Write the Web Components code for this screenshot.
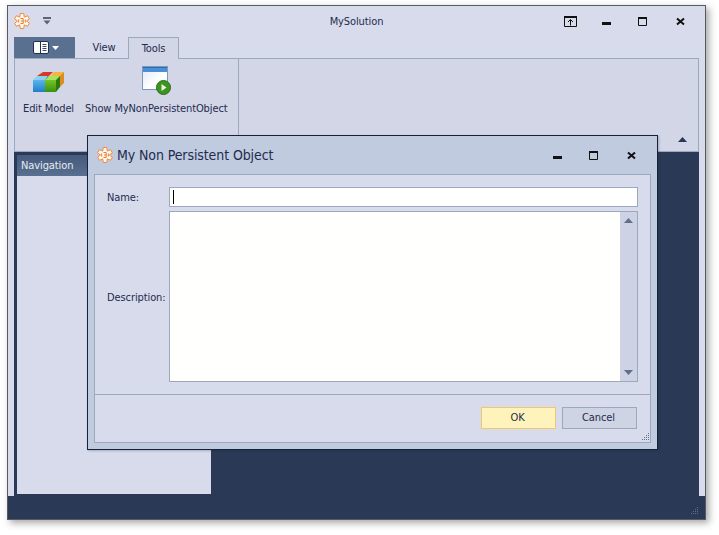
<!DOCTYPE html>
<html><head><meta charset="utf-8">
<style>
html,body{margin:0;background:#fff}
body{padding:5px 0 0 7px;font:11px "DejaVu Sans Condensed","DejaVu Sans",sans-serif;font-stretch:condensed;letter-spacing:-.1px;color:#1f2b4d;height:530px;box-sizing:border-box;overflow:hidden}
</style></head><body>
<x-window>
  <x-titlebar slot="title"></x-titlebar>
  <x-tabs slot="tabs"></x-tabs>
  <x-ribbon slot="ribbon"></x-ribbon>
  <x-nav slot="nav"></x-nav>
  <x-dialog slot="dialog"></x-dialog>
</x-window>
<script>
function logoPath(){let p=[];for(let i=0;i<6;i++){const a=(i*60-90)*Math.PI/180,d=.23,n=(i*60-60)*Math.PI/180;
 const pt=(r,t)=>(8+r*Math.cos(t)).toFixed(2)+' '+(8+r*Math.sin(t)).toFixed(2);
 p.push(pt(7.7,a-d),pt(7.7,a+d),pt(4.5,n));}return 'M'+p.join('L')+'z';}
const LOGO=(s)=>`<svg width="${s}" height="${s}" viewBox="0 0 16 16" style="display:block"><path d="${logoPath()}" fill="#fff8f0" stroke="#f28a3a" stroke-width="1" stroke-linejoin="miter"/><path d="M6.500 5.500h2.700v5H6.500M7 8h2M4.700 6.500v3M11.300 6.500v3" fill="none" stroke="#e97a28" stroke-width="1"/></svg>`;
const GRIP=`<svg width="8" height="8" viewBox="0 0 8 8" style="display:block" fill="#5f7088"><rect x="6" y="0" width="1" height="1"/><rect x="4" y="2" width="1" height="1"/><rect x="6" y="2" width="1" height="1"/><rect x="2" y="4" width="1" height="1"/><rect x="4" y="4" width="1" height="1"/><rect x="6" y="4" width="1" height="1"/><rect x="0" y="6" width="1" height="1"/><rect x="2" y="6" width="1" height="1"/><rect x="4" y="6" width="1" height="1"/><rect x="6" y="6" width="1" height="1"/></svg>`;
const ICON={
 min:`<svg width="9" height="9" viewBox="0 0 9 9"><rect x="0" y="5" width="9" height="3" fill="#111"/></svg>`,
 max:`<svg width="9" height="9" viewBox="0 0 9 9"><path d="M.5 1.500h8v7h-8z" fill="none" stroke="#111"/><rect y="0" width="9" height="2" fill="#111"/></svg>`,
 close:`<svg width="9" height="9" viewBox="0 0 9 9"><path d="M1 1.500l7 6M8 1.500l-7 6" stroke="#111" stroke-width="2" fill="none"/></svg>`,
 pin:`<svg width="13" height="11" viewBox="0 0 13 11"><path d="M.5.500h12v10H.5z" fill="none" stroke="#111"/><rect width="13" height="2" fill="#111"/><path d="M6.500 9.500V4M4 6l2.500-2.500L9 6" fill="none" stroke="#111"/></svg>`
};
function def(name,html,fn){customElements.define(name,class extends HTMLElement{constructor(){super();this.attachShadow({mode:'open'}).innerHTML=typeof html==='function'?html(this):html;}connectedCallback(){fn&&fn(this)}});}

def('x-window',`<style>
:host{display:block;position:relative;width:699px;height:515px;box-sizing:border-box;border:1px solid #565b63;background:#d8dbec;box-shadow:3px 3px 7px rgba(60,60,60,.45)}
.wrap{display:flex;flex-direction:column;height:100%}
.main{flex:none;height:344px;margin:0 6px;background:#2a3a56;padding:3px 0 2px 3px;box-sizing:border-box;display:flex}
.foot{flex:1;background:#2a3a56;display:flex;justify-content:flex-end;align-items:flex-end;padding:0 6px 4px 0}
</style>
<div class="wrap"><slot name="title"></slot><slot name="tabs"></slot><slot name="ribbon"></slot>
<div class="main"><slot name="nav"></slot></div>
<div class="foot">${GRIP}</div></div><slot name="dialog"></slot>`);

def('x-winbtn',h=>`<style>:host{display:block;line-height:0}</style>${ICON[h.getAttribute('icon')]}`);

def('x-titlebar',`<style>
:host{display:flex;height:31px;flex:none;align-items:center;position:relative;padding:0 0 1px 6px;box-sizing:border-box}
.qa{margin-left:13px;line-height:0}
.t{position:absolute;left:0;right:0;top:8px;text-align:center;pointer-events:none;padding-left:0;line-height:15px}
.b{margin-left:auto;display:flex;gap:0;align-items:center}
x-winbtn{margin-left:29px}
.b x-winbtn:first-child{margin:0}
.b x-winbtn:nth-child(2){margin-left:25px}
.b x-winbtn:nth-child(3){margin-left:27px}
</style>
<span style="line-height:0;margin-top:-1px">${LOGO(16)}</span>
<span class="qa"><svg width="8" height="8" viewBox="0 0 8 8"><rect width="8" height="2" y="0" fill="#5a6576"/><path d="M.5 3.500h7L4 7.500z" fill="#5a6576"/></svg></span>
<span class="t">MySolution</span>
<div class="b" style="padding-right:20px"><x-winbtn icon="pin"></x-winbtn><x-winbtn icon="min"></x-winbtn><x-winbtn icon="max"></x-winbtn><x-winbtn icon="close"></x-winbtn></div>`);

def('x-tabs',`<style>
:host{display:flex;height:21px;flex:none;margin:0 6px;align-items:stretch;position:relative;z-index:1}
.file{width:61px;background:#5a7090;display:flex;align-items:center;gap:3px;padding:0 0 0 19px;box-sizing:border-box}
.tab{text-align:center;line-height:22px}
.view{width:53px;padding-left:5px;box-sizing:border-box}
.tools{width:51px;height:22px;box-sizing:border-box;border:1px solid #9aa9bb;border-bottom:0;background:#d2d6e7;line-height:21px}
</style>
<div class="file"><svg width="16" height="13" viewBox="0 0 16 13"><rect x=".5" y=".5" width="15" height="12" rx="1.500" fill="#fff" stroke="#20314c"/><path d="M7.500 1v11" stroke="#20314c"/><path d="M9.500 3.500h4M9.500 5.500h4M9.500 7.500h4M9.500 9.500h4" stroke="#3b4a62"/></svg><svg width="7" height="4" viewBox="0 0 7 4"><path d="M0 0h7L3.500 4z" fill="#fff"/></svg></div>
<div class="tab view">View</div><div class="tab tools">Tools</div>`);

def('x-rbtn',`<style>
:host{display:flex;flex-direction:column;align-items:center;justify-content:flex-start}
.i{height:30px;display:flex;align-items:flex-end;justify-content:center}
.l{margin-top:5px;white-space:nowrap;line-height:16px}
</style><div class="i"><slot name="icon"></slot></div><div class="l"><slot></slot></div>`);

def('x-ribbon',`<style>
:host{display:block;height:94px;flex:none;margin:0 6px;box-sizing:border-box;border:1px solid #9aa9bb;background:#d2d6e7;position:relative}
.g{display:flex;height:100%;}
.grp{width:224px;border-right:1px solid #9aa9bb;display:flex;gap:11px;padding:7px 0 0 8px;box-sizing:border-box;height:100%}
.col{position:absolute;right:11px;bottom:9px;line-height:0}
</style>
<div class="g"><div class="grp">
<x-rbtn><svg slot="icon" width="34" height="24" viewBox="0 0 34 24" style="margin-bottom:2px">
<defs><linearGradient id="bl" x1="0" y1="0" x2="0" y2="1"><stop offset="0" stop-color="#5ab4ec"/><stop offset="1" stop-color="#1f7fc8"/></linearGradient><linearGradient id="gr" x1="0" y1="0" x2="0" y2="1"><stop offset="0" stop-color="#74c424"/><stop offset="1" stop-color="#36930f"/></linearGradient></defs>
<path d="M5 6l6-4h10l-5 5z" fill="#d8382c"/><path d="M19 6l3-4h10l-4 5z" fill="#f8b43c"/><path d="M27 7l5-5v11l-5 5z" fill="#d98f1e"/>
<path d="M1 10l4-4h11l-3 4z" fill="#8cd0f4"/><rect x="1" y="10" width="12" height="12" fill="url(#bl)"/><path d="M13 10l3-4v11l-3 5z" fill="#1a6ba8"/>
<path d="M13 10l4-4h11l-4 4z" fill="#a9e25c"/><rect x="13" y="10" width="11" height="12" fill="url(#gr)"/><path d="M24 10l4-4v11l-4 5z" fill="#2c7a0e"/>
</svg>Edit Model</x-rbtn>
<x-rbtn><svg slot="icon" width="30" height="30" viewBox="0 0 30 30" style="margin-left:2px">
<defs><linearGradient id="wb" x1="0" y1="0" x2="1" y2="1"><stop offset="0" stop-color="#dfe9f6"/><stop offset=".6" stop-color="#ffffff"/><stop offset="1" stop-color="#eef2f9"/></linearGradient></defs>
<rect x=".5" y=".5" width="25" height="23" fill="url(#wb)" stroke="#7d98bd"/><rect x="1" y="1" width="24" height="5" fill="#4a8fd8"/><rect x="1" y="1" width="24" height="1" fill="#2e6cb0"/>
<circle cx="21.500" cy="21.500" r="7" fill="#3d9420" stroke="#2a6e14"/><path d="M19.500 18l5 3.500-5 3.500z" fill="#e8f4e0"/></svg>Show MyNonPersistentObject</x-rbtn>
</div></div>
<div class="col"><svg width="9" height="5" viewBox="0 0 9 5"><path d="M0 5L4.500 0 9 5z" fill="#27395a"/></svg></div>`);

def('x-nav',`<style>
:host{display:block;width:194px;height:339px;background:#d8dbec}
.h{height:21px;line-height:22px;background:linear-gradient(#455a7c,#5a7090);color:#e8ecf4;padding-left:4px}
</style><div class="h">Navigation</div>`);

def('x-btn',h=>`<style>
:host{display:block;width:75px;height:22px;box-sizing:border-box;border:1px solid #9aa9bb;background:#cfd4e4;text-align:center;line-height:20px;padding-right:2px}
:host([primary]){background:#fff3bc;border-color:#efc76c}
</style><slot></slot>`);

def('x-scrollbar',`<style>
:host{display:flex;flex-direction:column;justify-content:space-between;align-items:center;width:17px;background:#cdd2e4;padding:6px 0;box-sizing:border-box;flex:none}
svg{display:block}</style>
<svg width="9" height="5" viewBox="0 0 9 5"><path d="M0 5L4.500 0 9 5z" fill="#5f7088"/></svg>
<svg width="9" height="5" viewBox="0 0 9 5"><path d="M0 0h9L4.500 5z" fill="#5f7088"/></svg>`);

def('x-dialog',`<style>
:host{position:absolute;left:79px;top:129px;width:571px;height:315px;box-sizing:border-box;border:1px solid #14233a;background:#c0cbe0;display:flex;flex-direction:column;padding:0 6px 6px 6px;z-index:2;box-shadow:1px 1px 2px rgba(20,30,50,.25)}
.tb{height:38px;flex:none;display:flex;align-items:center;margin-left:-6px;padding-left:9px}
.tt{font-size:14px;margin-left:4px;line-height:18px;letter-spacing:-.1px}
.wb{margin-left:auto;display:flex;padding-right:15px;align-items:center}
.wb x-winbtn:nth-child(2){margin-left:27px}.wb x-winbtn:nth-child(3){margin-left:29px}
.body{flex:1;border:1px solid #9aa9bb;background:#d8dbec;display:flex;flex-direction:column;min-height:0;position:relative}
.form{display:grid;grid-template-columns:62px 469px;grid-template-rows:20px 171px;row-gap:4px;padding:12px;height:220px;box-sizing:border-box;align-items:center;border-bottom:1px solid #9aa9bb}
.form label{white-space:nowrap}
.form label.d{padding-top:2px}
.in{box-sizing:border-box;height:100%;border:1px solid #9aa9bb;background:#fff;position:relative}
.in i{position:absolute;left:3px;top:2px;width:1px;height:14px;background:#000}
.ta{box-sizing:border-box;height:100%;border:1px solid #9aa9bb;background:#fffffd;display:flex;justify-content:flex-end}
.ft{display:flex;justify-content:flex-end;gap:6px;padding:12px 13px 0 0}
.gr{position:absolute;right:0;bottom:1px;line-height:0}
</style>
<div class="tb"><span style="line-height:0">${LOGO(16)}</span><span class="tt">My Non Persistent Object</span>
<div class="wb"><x-winbtn icon="min"></x-winbtn><x-winbtn icon="max"></x-winbtn><x-winbtn icon="close"></x-winbtn></div></div>
<div class="body"><div class="form"><label>Name:</label><div class="in"><i></i></div><label class="d">Description:</label><div class="ta"><x-scrollbar></x-scrollbar></div></div>
<div class="ft"><x-btn primary>OK</x-btn><x-btn>Cancel</x-btn></div><div class="gr">${GRIP}</div></div>`);
</script>
</body></html>
